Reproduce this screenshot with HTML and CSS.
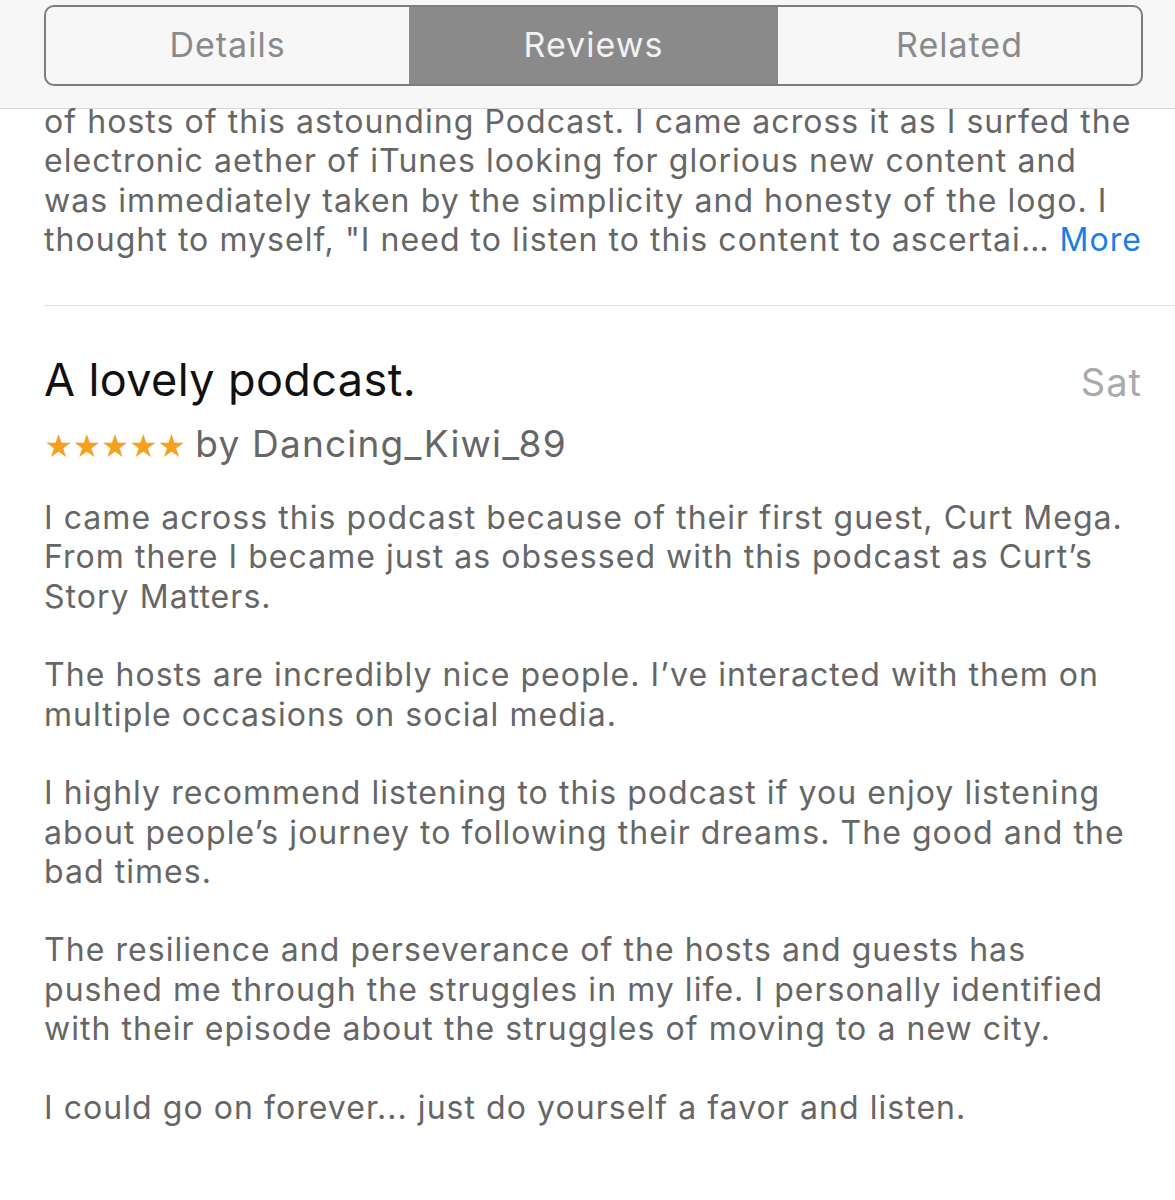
FILE: index.html
```html
<!DOCTYPE html>
<html lang="en">
  <head>
    <meta charset="UTF-8" />
    <title>Reviews</title>
    <link rel="stylesheet" href="styles.css">
  </head>
  <body>
    <header class="tabs-bar">
      <nav class="segmented">
        <a href="#details">Details</a>
        <a href="#reviews" class="-active">Reviews</a>
        <a href="#related">Related</a>
      </nav>
    </header>
    <main class="reviews">
      <section class="review -cut">
        <p class="review-body">of hosts of this astounding Podcast. I came across it as I surfed the<br>electronic aether of iTunes looking for glorious new content and<br>was immediately taken by the simplicity and honesty of the logo. I<br><span class="last-line"><span>thought to myself, "I need to listen to this content to ascertai…</span><a href="#more" class="more">More</a></span></p>
      </section>
      <section class="review">
        <div class="review-head">
          <h2>A lovely podcast.</h2>
          <span class="date">Sat</span>
        </div>
        <div class="review-meta">
          <span class="stars">★★★★★</span>
          <span class="author">by Dancing_Kiwi_89</span>
        </div>
        <div class="review-text">
          <p>I came across this podcast because of their first guest, Curt Mega.<br>From there I became just as obsessed with this podcast as Curt’s<br>Story Matters.</p>
          <p>The hosts are incredibly nice people. I’ve interacted with them on<br>multiple occasions on social media.</p>
          <p>I highly recommend listening to this podcast if you enjoy listening<br>about people’s journey to following their dreams. The good and the<br>bad times.</p>
          <p>The resilience and perseverance of the hosts and guests has<br>pushed me through the struggles in my life. I personally identified<br>with their episode about the struggles of moving to a new city.</p>
          <p>I could go on forever... just do yourself a favor and listen.</p>
        </div>
      </section>
    </main>
  </body>
</html>
```

FILE: styles.css
```css
* {
  margin: 0;
  padding: 0;
  box-sizing: border-box;
}

body {
  font-family: Inter, "Liberation Sans", sans-serif;
  background-color: #fff;
  color: #666;
}

.tabs-bar {
  padding: 5px 32px 0 44px;
  height: 109px;
  background-color: #f7f7f7;
  border-bottom: 1px solid #d6d6d6;
}

.segmented {
  display: flex;
  height: 81px;
  border: 2px solid #7d7d7d;
  border-radius: 10px;
  overflow: hidden;
}

.segmented a {
  flex: 1;
  display: flex;
  align-items: center;
  justify-content: center;
  padding-bottom: 3px;
  font-size: 34px;
  letter-spacing: 1px;
  color: #8a8a8a;
  text-decoration: none;
}

.segmented a.-active {
  flex: 0 0 369px;
  background-color: #8a8a8a;
  color: #f2f2f2;
}

.reviews {
  padding-left: 44px;
}

.review {
  padding-right: 33px;
}

.review.-cut {
  padding-bottom: 46px;
  border-bottom: 1px solid #e0e0e0;
}

.review-body,
.review-text p {
  font-size: 32px;
  line-height: 39.3px;
  letter-spacing: 1.05px;
  white-space: nowrap;
}

.review-body {
  margin-top: -7px;
}

.last-line {
  display: flex;
  justify-content: space-between;
  align-items: baseline;
}

.more {
  color: #1a7ee6;
  text-decoration: none;
}

.review-head {
  display: flex;
  justify-content: space-between;
  align-items: baseline;
  margin-top: 46px;
}

.review-head h2 {
  font-size: 45px;
  font-weight: 400;
  letter-spacing: 0.4px;
  color: #111;
}

.date {
  font-size: 38px;
  letter-spacing: 1px;
  color: #aaa;
}

.review-meta {
  display: flex;
  align-items: baseline;
  gap: 10px;
  margin-top: 14px;
}

.stars {
  font-size: 28px;
  color: #f5a01e;
  letter-spacing: -1px;
}

.author {
  font-size: 37px;
  letter-spacing: 1.2px;
  color: #666;
}

.review-text {
  margin-top: 32px;
}

.review-text p + p {
  margin-top: 39.3px;
}
```
